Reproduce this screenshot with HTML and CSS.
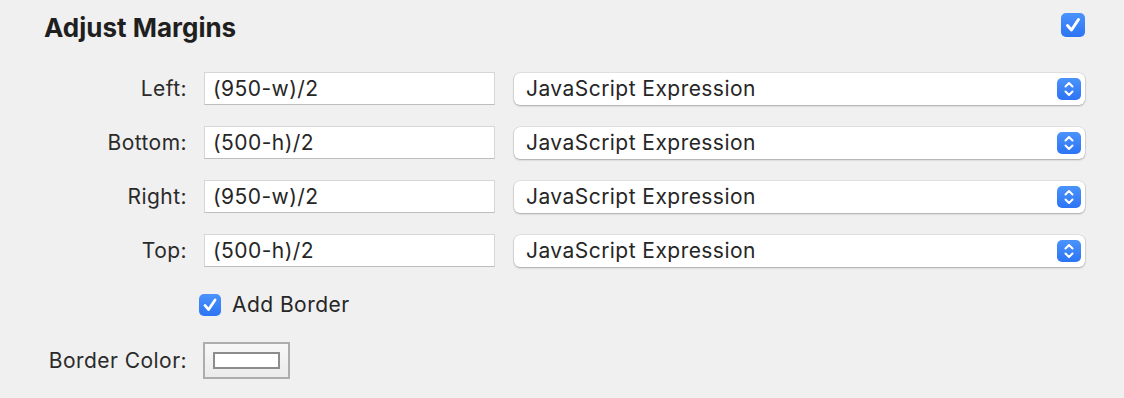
FILE: index.html
```html
<html lang="en">
  <head>
    <meta charset="UTF-8" />
    <title>Adjust Margins</title>
    <link rel="stylesheet" href="styles.css">
  </head>
  <body>
    <div class="panel">
      <div class="header">
        <h1 class="title">Adjust Margins</h1>
        <span class="check big">
          <svg viewBox="0 0 24 24"><path d="M6.5 12.5 L10.5 17 L17.5 6.5" /></svg>
        </span>
      </div>
      <div class="fields">
        <label class="label">Left:</label>
        <input class="field" type="text" value="(950-w)/2" />
        <div class="select">
          <span>JavaScript Expression</span>
          <span class="stepper">
            <svg viewBox="0 0 24 22"><path d="M8.5 8.5 L12 5 L15.5 8.5 M8.5 13.5 L12 17 L15.5 13.5" /></svg>
          </span>
        </div>

        <label class="label">Bottom:</label>
        <input class="field" type="text" value="(500-h)/2" />
        <div class="select">
          <span>JavaScript Expression</span>
          <span class="stepper">
            <svg viewBox="0 0 24 22"><path d="M8.5 8.5 L12 5 L15.5 8.5 M8.5 13.5 L12 17 L15.5 13.5" /></svg>
          </span>
        </div>

        <label class="label">Right:</label>
        <input class="field" type="text" value="(950-w)/2" />
        <div class="select">
          <span>JavaScript Expression</span>
          <span class="stepper">
            <svg viewBox="0 0 24 22"><path d="M8.5 8.5 L12 5 L15.5 8.5 M8.5 13.5 L12 17 L15.5 13.5" /></svg>
          </span>
        </div>

        <label class="label">Top:</label>
        <input class="field" type="text" value="(500-h)/2" />
        <div class="select">
          <span>JavaScript Expression</span>
          <span class="stepper">
            <svg viewBox="0 0 24 22"><path d="M8.5 8.5 L12 5 L15.5 8.5 M8.5 13.5 L12 17 L15.5 13.5" /></svg>
          </span>
        </div>
      </div>

      <div class="border-row">
        <span class="check small">
          <svg viewBox="0 0 24 24"><path d="M6.5 12.5 L10.5 17 L17.5 6.5" /></svg>
        </span>
        <span class="check-text">Add Border</span>
      </div>

      <div class="color-row">
        <span class="label">Border Color:</span>
        <div class="well"><div class="swatch"></div></div>
      </div>
    </div>
  </body>
</html>
```

FILE: styles.css
```css
body {
  margin: 0;
  background-color: #f0f0f0;
  color: #262626;
  font-family: "Inter", "Liberation Sans", sans-serif;
  font-size: 21px;
  letter-spacing: 0.45px;
}
.panel {
  padding: 12px 39px 0 0;
}
.header {
  display: flex;
  justify-content: space-between;
  align-items: flex-start;
  padding-left: 44px;
}
.title {
  margin: 0;
  font-size: 26px;
  font-weight: 700;
  letter-spacing: 0;
  color: #1f1f1f;
}
.check {
  display: flex;
  justify-content: center;
  align-items: center;
  border-radius: 5px;
  background: linear-gradient(#4b93fb, #2c74f4);
}
.check svg {
  width: 100%;
  height: 100%;
}
.check path {
  fill: none;
  stroke: #fff;
  stroke-width: 3;
  stroke-linecap: round;
  stroke-linejoin: round;
}
.check.big {
  width: 24px;
  height: 24px;
  margin-top: 1px;
}
.check.small {
  width: 22px;
  height: 22px;
}
.fields {
  display: grid;
  grid-template-columns: 187px 292px 1fr;
  column-gap: 16px;
  row-gap: 21px;
  align-items: center;
  margin-top: 29px;
}
.label {
  text-align: right;
  color: #2a2a2a;
}
.field {
  height: 33px;
  margin: 0 0 0 1px;
  padding: 0 8px;
  border: 1px solid #d6d6d6;
  border-bottom-color: #bdbdbd;
  background-color: #fff;
  font-family: inherit;
  font-size: 21px;
  letter-spacing: 0.45px;
  color: #262626;
  outline: none;
}
.select {
  display: flex;
  justify-content: space-between;
  align-items: center;
  height: 32px;
  margin-left: 3px;
  padding: 0 4px 0 12px;
  border-radius: 6px;
  background-color: #fff;
  box-shadow: 0 0 0 0.5px rgba(0, 0, 0, 0.12), 0 1px 2px rgba(0, 0, 0, 0.25);
}
.stepper {
  display: flex;
  width: 24px;
  height: 22px;
  border-radius: 5px;
  background: linear-gradient(#4b93fb, #2c74f4);
}
.stepper svg {
  width: 100%;
  height: 100%;
}
.stepper path {
  fill: none;
  stroke: #fff;
  stroke-width: 2;
  stroke-linecap: round;
  stroke-linejoin: round;
}
.border-row {
  display: flex;
  align-items: center;
  gap: 11px;
  margin: 25px 0 0 199px;
}
.color-row {
  display: flex;
  align-items: center;
  gap: 16px;
  margin-top: 25px;
}
.color-row .label {
  width: 187px;
}
.well {
  display: flex;
  justify-content: center;
  align-items: center;
  width: 83px;
  height: 33px;
  border: 2px solid #adadad;
  background: linear-gradient(#f7f7f7, #ebebeb);
}
.swatch {
  width: 63px;
  height: 13px;
  border: 2px solid #8c8c8c;
  background-color: #fff;
}
```
